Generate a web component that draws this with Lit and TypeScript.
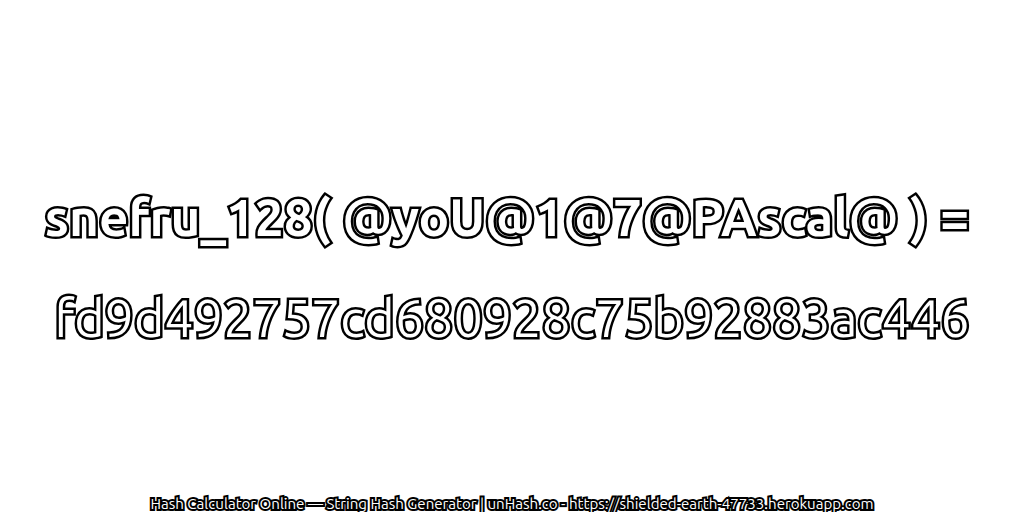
import { LitElement, html, css } from "lit";
import { customElement } from "lit/decorators.js";

@customElement("app-root")
export class AppRoot extends LitElement {
  static styles = css`
    :host { display: flex; flex-direction: column; align-items: center; width: 1024px; height: 512px; background: #fff; overflow: hidden; font-family: "Ubuntu", "Noto Sans", "DejaVu Sans", sans-serif; }
    .main { flex: 1; display: flex; flex-direction: column; align-items: center; justify-content: center; gap: 41px; padding-top: 39px; }
    .line { font-size: 52px; line-height: 60px; color: #fff; -webkit-text-stroke: 5px #000; paint-order: stroke fill; white-space: nowrap; }
    .fat { font-size: 51.2px; font-weight: 700; padding-right: 10px; }
    .foot { font-size: 15.1px; line-height: 16px; color: #fff; -webkit-text-stroke: 4px #000; paint-order: stroke fill; white-space: nowrap; }
  `;
  render() {
    return html`<div class="main"><div class="line fat">snefru_128( @yoU@1@7@PAscal@ ) =</div><div class="line">fd9d492757cd680928c75b92883ac446</div></div>
    <div class="foot">Hash Calculator Online — String Hash Generator | unHash.co - https://shielded-earth-47733.herokuapp.com</div>`;
  }
}
